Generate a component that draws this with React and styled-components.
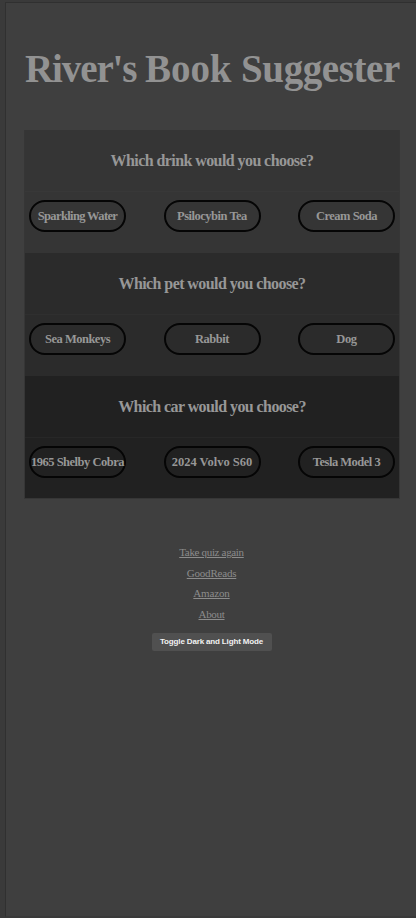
import React from "react";
import styled, { createGlobalStyle } from "styled-components";

const GlobalStyle = createGlobalStyle`
  *, *::before, *::after { box-sizing: border-box; }
  html, body { margin: 0; height: 100%; }
  body {
    background: #3a3a3a;
    color: #979797;
    font-family: "Liberation Serif", "Times New Roman", serif;
    overflow: hidden;
  }
`;

const Viewport = styled.div`
  height: 918px;
  padding: 2px 0 0 5px;
`;

const Page = styled.main`
  height: 915px;
  padding: 0 16px 0 19px;
  border-top: 1px solid #303030;
  border-left: 1px solid #303030;
  border-bottom: 1px solid #393939;
  background: #3f3f3f;
  display: flex;
  flex-direction: column;
  align-items: stretch;
`;

const Title = styled.h1`
  margin: 42px 0 0;
  height: 85px;
  display: flex;
  justify-content: flex-start;
  white-space: pre;
  font-size: 39px;
  line-height: 48px;
  font-weight: 700;
  color: #929292;
`;

const TitleWord = styled.span`
  letter-spacing: ${(p) => p.$tracking}px;
`;

const Quiz = styled.div`
  border: 1px solid #363636;
  border-top: 0;
  margin-left: -1px;
`;

const Question = styled.section`
  height: ${(p) => p.$height}px;
  background: ${(p) => p.$tone};
`;

const Prompt = styled.h2`
  margin: 0;
  height: 62px;
  border-bottom: 1px solid ${(p) => p.$line};
  display: flex;
  align-items: center;
  justify-content: center;
  white-space: nowrap;
  font-size: 16px;
  font-weight: 700;
  letter-spacing: -0.58px;
`;

const Options = styled.div`
  display: flex;
  justify-content: space-between;
  padding: 8px 4px 0;
`;

const Option = styled.button`
  width: 97px;
  height: 32px;
  padding: 0;
  display: flex;
  align-items: center;
  justify-content: center;
  border: 2px solid #050505;
  border-radius: 16px;
  background: transparent;
  color: inherit;
  font-family: inherit;
  font-size: 12.5px;
  font-weight: 700;
  letter-spacing: ${(p) => p.$tracking}px;
  white-space: nowrap;
`;

const Footer = styled.footer`
  margin-top: 43px;
  padding-right: 2px;
  display: flex;
  flex-direction: column;
  align-items: center;
`;

const FooterLink = styled.a`
  height: 20.7px;
  line-height: 20.7px;
  font-size: 11px;
  letter-spacing: ${(p) => p.$tracking}px;
  color: #8c8c8c;
  text-decoration: underline;
`;

const ModeButton = styled.button`
  margin-top: 8px;
  width: 120px;
  height: 18px;
  padding: 0;
  border: 0;
  border-radius: 2px;
  background: #505050;
  color: #f2f2f2;
  font: 700 8px/18px "Liberation Sans", Arial, sans-serif;
  letter-spacing: -0.15px;
  white-space: nowrap;
`;

const titleWords = [["River's ", -1.1], ["Book ", -0.1], ["Suggester", -0.4]];

const questions = [
  {
    prompt: "Which drink would you choose?",
    height: 123,
    tone: "#353535",
    line: "#383838",
    options: [["Sparkling Water", -0.63], ["Psilocybin Tea", -0.5], ["Cream Soda", -0.5]],
  },
  {
    prompt: "Which pet would you choose?",
    height: 123,
    tone: "#2b2b2b",
    line: "#2f2f2f",
    options: [["Sea Monkeys", -0.5], ["Rabbit", -0.5], ["Dog", -0.3]],
  },
  {
    prompt: "Which car would you choose?",
    height: 122,
    tone: "#212121",
    line: "#272727",
    options: [["1965 Shelby Cobra", -0.5], ["2024 Volvo S60", 0], ["Tesla Model 3", -0.5]],
  },
];

const links = [["Take quiz again", -0.33], ["GoodReads", -0.2], ["Amazon", -0.15], ["About", -0.3]];

export default function App() {
  return (
    <>
      <GlobalStyle />
      <Viewport>
        <Page>
          <Title>
            {titleWords.map(([word, tracking]) => (
              <TitleWord key={word} $tracking={tracking}>{word}</TitleWord>
            ))}
          </Title>
          <Quiz>
            {questions.map((q) => (
              <Question key={q.prompt} $height={q.height} $tone={q.tone}>
                <Prompt $line={q.line}>{q.prompt}</Prompt>
                <Options>
                  {q.options.map(([label, tracking]) => (
                    <Option key={label} $tracking={tracking}>{label}</Option>
                  ))}
                </Options>
              </Question>
            ))}
          </Quiz>
          <Footer>
            {links.map(([label, tracking]) => (
              <FooterLink key={label} href="#" $tracking={tracking}>{label}</FooterLink>
            ))}
            <ModeButton>Toggle Dark and Light Mode</ModeButton>
          </Footer>
        </Page>
      </Viewport>
    </>
  );
}
